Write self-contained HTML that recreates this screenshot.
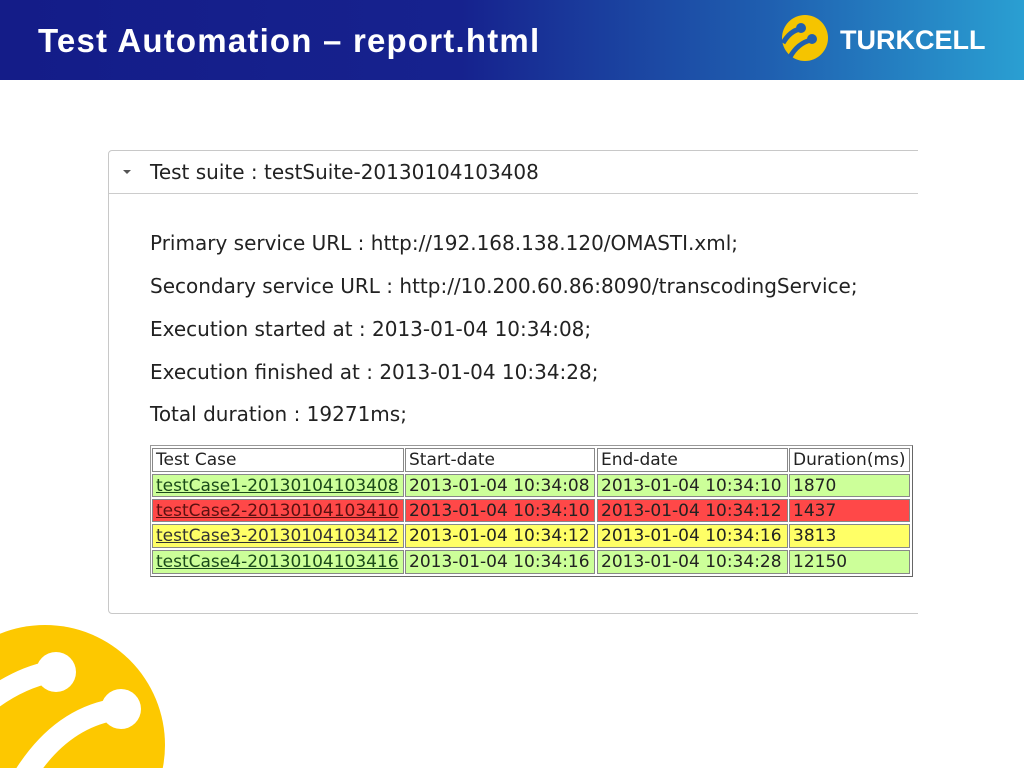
<!DOCTYPE html>
<html><head><meta charset="utf-8"><style>
*{margin:0;padding:0;box-sizing:border-box}
html{overflow:hidden;width:1024px;height:768px}
body{width:1024px;height:768px;overflow:hidden;background:#fff;position:relative;font-family:"DejaVu Sans","Liberation Sans",sans-serif;color:#222}
#hdr{position:absolute;left:0;top:0;width:1024px;height:80px;background:linear-gradient(90deg,#141c88 0%,#16228e 45%,#1f5fb0 75%,#2a9fd2 100%)}
#title{position:absolute;left:38px;top:22px;font-family:"Liberation Sans",sans-serif;font-weight:bold;font-size:33px;color:#fff;letter-spacing:1.2px}
#tc{position:absolute;left:840px;top:25px;font-family:"Liberation Sans",sans-serif;font-weight:bold;font-size:27px;color:#fff}
#panel{position:absolute;left:108px;top:150px;width:830px;height:464px;border:1px solid #c8c8c8;border-radius:4px}
#clip{position:absolute;left:0;top:0;width:918px;height:620px;overflow:hidden}
#ph{position:absolute;left:0;top:0;width:100%;height:43px;border-bottom:1px solid #ccc}
.t{position:absolute;left:150px;font-size:20px;white-space:nowrap;line-height:24px}
.c{position:absolute;font-size:17px;white-space:nowrap;border:1px solid #888;padding-left:3px;line-height:22px;overflow:hidden}
.g{background:#ccff99}.r{background:#ff4848}.y{background:#ffff66}.w{background:#fff}
.u{text-decoration:underline;color:#1a4a1a}
</style></head><body>
<div id="hdr"></div>
<div id="title">Test Automation – report.html</div>
<svg style="position:absolute;left:780px;top:13px" width="52" height="50" viewBox="0 0 52 50">
<circle cx="25" cy="25" r="23" fill="#f5c400"/>
<path d="M3 30 Q10 18 20 16" stroke="#1f5fb0" stroke-width="5" fill="none"/>
<circle cx="21" cy="15" r="5" fill="#1f5fb0"/>
<path d="M10 44 Q18 30 31 27" stroke="#1f5fb0" stroke-width="5" fill="none"/>
<circle cx="32" cy="26" r="5" fill="#1f5fb0"/>
</svg>
<div id="tc">TURKCELL</div>
<div id="clip">
<div id="panel"><div id="ph"></div></div>
<div style="position:absolute;left:123px;top:170px;width:0;height:0;border-left:4px solid transparent;border-right:4px solid transparent;border-top:4px solid #555"></div>
<div class="t" style="top:160px">Test suite : testSuite-20130104103408</div>
<div class="t" style="top:231px">Primary service URL : http://192.168.138.120/OMASTI.xml;</div>
<div class="t" style="top:274px">Secondary service URL : http://10.200.60.86:8090/transcodingService;</div>
<div class="t" style="top:317px">Execution started at : 2013-01-04 10:34:08;</div>
<div class="t" style="top:360px">Execution finished at : 2013-01-04 10:34:28;</div>
<div class="t" style="top:402px">Total duration : 19271ms;</div>
<div style="position:absolute;left:150px;top:445px;width:763px;height:132px;border:1px solid #999;border-right-color:#666;border-bottom-color:#666"></div>
<div class="c w" style="left:152px;top:448px;width:252px;height:24px">Test Case</div>
<div class="c w" style="left:405px;top:448px;width:190px;height:24px">Start-date</div>
<div class="c w" style="left:597px;top:448px;width:191px;height:24px">End-date</div>
<div class="c w" style="left:789px;top:448px;width:121px;height:24px">Duration(ms)</div>

<div class="c g u" style="left:152px;top:474px;width:252px;height:23px">testCase1-20130104103408</div>
<div class="c g" style="left:405px;top:474px;width:190px;height:23px">2013-01-04 10:34:08</div>
<div class="c g" style="left:597px;top:474px;width:191px;height:23px">2013-01-04 10:34:10</div>
<div class="c g" style="left:789px;top:474px;width:121px;height:23px">1870</div>

<div class="c r u" style="left:152px;top:499px;width:252px;height:23px;color:#5a1010">testCase2-20130104103410</div>
<div class="c r" style="left:405px;top:499px;width:190px;height:23px">2013-01-04 10:34:10</div>
<div class="c r" style="left:597px;top:499px;width:191px;height:23px">2013-01-04 10:34:12</div>
<div class="c r" style="left:789px;top:499px;width:121px;height:23px">1437</div>

<div class="c y u" style="left:152px;top:524px;width:252px;height:24px;color:#333">testCase3-20130104103412</div>
<div class="c y" style="left:405px;top:524px;width:190px;height:24px">2013-01-04 10:34:12</div>
<div class="c y" style="left:597px;top:524px;width:191px;height:24px">2013-01-04 10:34:16</div>
<div class="c y" style="left:789px;top:524px;width:121px;height:24px">3813</div>

<div class="c g u" style="left:152px;top:550px;width:252px;height:24px">testCase4-20130104103416</div>
<div class="c g" style="left:405px;top:550px;width:190px;height:24px">2013-01-04 10:34:16</div>
<div class="c g" style="left:597px;top:550px;width:191px;height:24px">2013-01-04 10:34:28</div>
<div class="c g" style="left:789px;top:550px;width:121px;height:24px">12150</div>
</div>
<svg style="position:absolute;left:0;top:600px;display:block" width="200" height="168" viewBox="0 0 200 168">
<circle cx="45" cy="145" r="120" fill="#fdc800"/>
<path d="M-10 100 Q20 78 50 72" stroke="#fff" stroke-width="22" fill="none"/>
<circle cx="56" cy="72" r="20" fill="#fff"/>
<path d="M25 175 Q60 120 112 110" stroke="#fff" stroke-width="22" fill="none"/>
<circle cx="121" cy="109" r="20" fill="#fff"/>
</svg>
</body></html>
